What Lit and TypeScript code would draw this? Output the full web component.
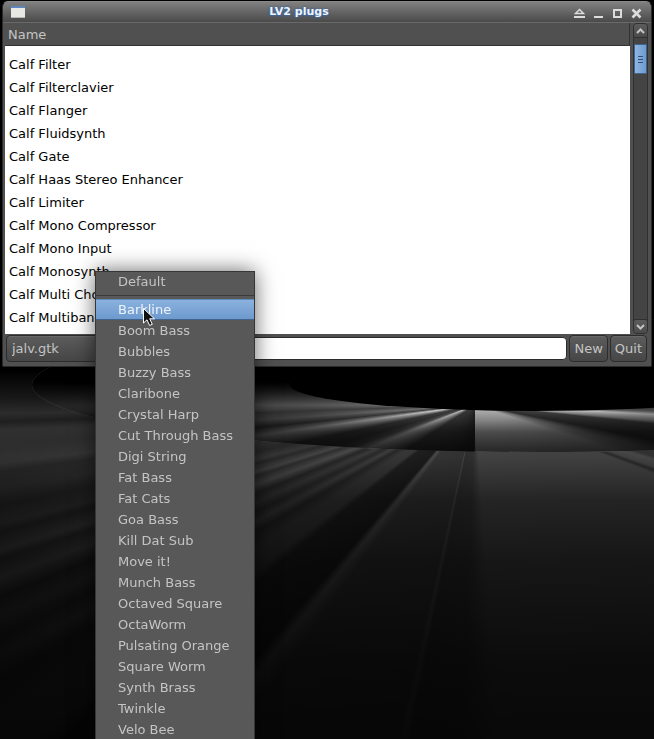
import { LitElement, html, css, svg } from "lit";
import { customElement, state, query } from "lit/decorators.js";
import { classMap } from "lit/directives/class-map.js";

const PLUGINS = [
  "Calf Exciter",
  "Calf Filter",
  "Calf Filterclavier",
  "Calf Flanger",
  "Calf Fluidsynth",
  "Calf Gate",
  "Calf Haas Stereo Enhancer",
  "Calf Limiter",
  "Calf Mono Compressor",
  "Calf Mono Input",
  "Calf Monosynth",
  "Calf Multi Chorus",
  "Calf Multiband Compressor",
  "Calf Multiband Enhancer",
];

const PRESETS = [
  "Barkline",
  "Boom Bass",
  "Bubbles",
  "Buzzy Bass",
  "Claribone",
  "Crystal Harp",
  "Cut Through Bass",
  "Digi String",
  "Fat Bass",
  "Fat Cats",
  "Goa Bass",
  "Kill Dat Sub",
  "Move it!",
  "Munch Bass",
  "Octaved Square",
  "OctaWorm",
  "Pulsating Orange",
  "Square Worm",
  "Synth Brass",
  "Twinkle",
  "Velo Bee",
];

/** Wallpaper: a dark floor with light rays fanning out below a black disc. */
@customElement("desk-wallpaper")
export class DeskWallpaper extends LitElement {
  static styles = css`
    :host {
      display: block;
      position: absolute;
      inset: 0;
      overflow: hidden;
      background: #050505;
    }
    .layer {
      position: absolute;
      inset: 0;
    }
    .floor {
      background:
        linear-gradient(180deg, #000 370px, rgba(0, 0, 0, 0.2) 412px, transparent 430px, rgba(0, 0, 0, 0.05) 455px, rgba(0, 0, 0, 0.48) 500px, rgba(0, 0, 0, 0.68) 560px, rgba(0, 0, 0, 0.83) 660px, rgba(0, 0, 0, 0.88) 739px),
        conic-gradient(from 90deg at 475px 405px,
          #333 0deg, #333 16deg, #4a4a4a 17deg, #444 19deg, #2a2a2a 20deg, #444 21deg, #464646 86deg,
          #323232 92deg, #303030 101deg, #484848 102deg, #343434 103deg, #363636 126deg, #4e4e4e 129deg,
          #1c1c1c 131deg, #202020 141deg, #383838 143deg, #383838 147deg, #282828 150deg, #404040 152deg,
          #2a2a2a 154deg, #3c3c3c 156deg, #282828 158deg, #4c4c4c 160deg, #303030 162deg, #464646 163deg, #2a2a2a 165deg,
          #383838 166deg, #282828 168deg, #303030 170deg, #2a2a2a 172deg, #363636 173deg, #2e2e2e 175deg, #303030 177deg, #222 178deg, #363636 179deg, #2c2c2c 181deg, #2c2c2c 360deg);
    }
    .ring {
      clip-path: ellipse(508px 67px at 540px 385px);
      background:
        radial-gradient(ellipse 420px 120px at 475px 410px, transparent 10%, rgba(0, 0, 0, 0.35) 40%, rgba(0, 0, 0, 0.6) 70%, rgba(0, 0, 0, 0.72) 100%),
        linear-gradient(180deg, #000 382px, rgba(0, 0, 0, 0.25) 403px, transparent 411px, rgba(0, 0, 0, 0.5) 432px, rgba(0, 0, 0, 0.68) 452px),
        conic-gradient(from 90deg at 475px 405px,
          #555 0deg, #777 2deg, #eee 3deg, #999 5deg, #444 6deg, #303030 11deg, #777 14deg, #aaa 18deg, #aaa 89deg,
          #202020 91deg, #303030 120deg, #383838 147deg, #888 154deg, #bbb 158deg, #555 161deg, #383838 164deg,
          #404040 168deg, #ccc 172deg, #444 174deg, #777 176deg, #505050 178deg, #999 180deg, #777 184deg, #333 190deg, #333 360deg);
    }
    .disc {
      clip-path: ellipse(245px 26px at 535px 385px);
      background: #000;
    }
  `;

  render() {
    return html`
      <div class="layer floor"></div>
      <div class="layer ring"></div>
      <div class="layer disc"></div>
    `;
  }
}

@customElement("app-root")
export class AppRoot extends LitElement {
  @state() private active = "Barkline";
  @query(".viewport") private viewport!: HTMLElement;

  static styles = css`
    :host {
      display: block;
      position: relative;
      box-sizing: border-box;
      height: 100vh;
      padding: 1px 2px 0;
      overflow: hidden;
      background: #050505;
      font: 13px/21px "DejaVu Sans", sans-serif;
      color: #c4c4c4;
    }
    * {
      box-sizing: border-box;
    }
    button,
    input,
    select {
      margin: 0;
      font: inherit;
      color: inherit;
    }
    .window {
      position: relative;
      border: 1px solid #2a2a2a;
      border-top-color: #8a8a8a;
      border-radius: 6px 6px 2px 2px;
      background: #505050;
    }
    .titlebar {
      display: flex;
      align-items: center;
      height: 20px;
      padding: 0 8px 0 7px;
      border-radius: 5px 5px 0 0;
      background: linear-gradient(#808080, #4a4a4a);
    }
    .app-icon {
      display: block;
    }
    .title {
      flex: 1;
      margin: 0;
      font-size: 11px;
      line-height: 20px;
      font-weight: bold;
      text-align: center;
      color: #f0f4fa;
      text-shadow: 0 0 2px #3c6ca8, 0 0 2px #3c6ca8, 0 1px 2px #3c6ca8;
    }
    .controls {
      display: flex;
      justify-content: flex-end;
      gap: 5px;
    }
    .control {
      display: block;
      width: 14px;
      height: 14px;
      padding: 0;
      border: 0;
      background: none;
      color: #dcdcdc;
    }
    .control svg {
      display: block;
    }
    .body {
      display: flex;
      gap: 3px;
      padding: 0 3px 0 2px;
      border-top: 1px solid #6a6a6a;
    }
    .viewport {
      flex: 1;
      height: 311px;
      overflow: hidden;
      background: #fff;
    }
    table {
      width: 100%;
      border-collapse: separate;
      border-spacing: 0;
    }
    th {
      position: sticky;
      top: 0;
      height: 23px;
      padding: 0 3px;
      border: 1px solid #333;
      border-width: 0 1px 1px 0;
      background: #505050;
      line-height: 21px;
      font-weight: normal;
      text-align: left;
    }
    td {
      height: 23px;
      padding: 0 4px;
      color: #000;
    }
    .scrollbar {
      display: flex;
      flex-direction: column;
      width: 15px;
      border: 1px solid #303030;
      border-radius: 4px;
      background: #444;
    }
    .step {
      display: block;
      width: 13px;
      height: 13px;
      padding: 1px;
      border: 0;
      border-radius: 3px;
      background: linear-gradient(#5c5c5c, #4a4a4a);
    }
    .step svg {
      display: block;
    }
    .track {
      flex: 1;
      padding-top: 6px;
      border: 1px solid #303030;
      border-width: 1px 0;
    }
    .thumb {
      display: flex;
      flex-direction: column;
      align-items: center;
      justify-content: center;
      gap: 2px;
      height: 30px;
      border: 1px solid #41638c;
      background: linear-gradient(90deg, #8fb6e2, #6d9acf);
    }
    .grip {
      width: 5px;
      height: 1px;
      background: #2f5078;
    }
    .actions {
      display: flex;
      align-items: center;
      gap: 2px;
      padding: 1px 4px 4px 3px;
    }
    .combo,
    .push {
      height: 27px;
      border: 1px solid #2c2c2c;
      border-radius: 4px;
      background: linear-gradient(#5c5c5c, #464646);
      box-shadow: inset 0 1px #686868;
    }
    .combo {
      appearance: none;
      width: 110px;
      padding: 0 5px;
    }
    .push {
      padding: 0 4px;
    }
    .entry {
      flex: 1;
      min-width: 0;
      height: 23px;
      padding: 0 5px;
      border: 1px solid #2c2c2c;
      border-radius: 4px;
      background: #fff;
      color: #000;
    }
    .menu {
      position: absolute;
      top: 271px;
      left: 95px;
      width: 160px;
      padding-bottom: 4px;
      border: 1px solid #363636;
      background: #585858;
      box-shadow: 0 0 20px rgba(0, 0, 0, 0.6);
    }
    .item {
      display: block;
      width: 100%;
      height: 21px;
      padding: 0 22px;
      border: 0;
      background: none;
      line-height: 20px;
      text-align: left;
      white-space: nowrap;
    }
    .item.active {
      background: linear-gradient(#8db3df, #6b98cd);
      box-shadow: inset 0 1px #5d8abf, inset 0 -1px #41638c;
      color: #eef3fa;
    }
    .group {
      height: 24px;
      border-bottom: 1px solid #3a3a3a;
      margin-bottom: 3px;
    }
    .group .item {
      height: 19px;
    }
    .pointer {
      position: absolute;
      top: 307px;
      left: 142px;
      pointer-events: none;
    }
  `;

  firstUpdated() {
    // The list is scrolled so that the first row is mostly under the header.
    this.viewport.scrollTop = 16;
  }

  private chevron(d: string) {
    return html`<svg width="11" height="11" viewBox="0 0 11 11" aria-hidden="true">
      ${svg`<path d=${d} fill="none" stroke="#c4c4c4" stroke-width="2" />`}
    </svg>`;
  }

  private menuItem(name: string) {
    return html`<button
      class=${classMap({ item: true, active: name === this.active })}
      role="menuitem"
      @mouseenter=${() => (this.active = name)}
    >${name}</button>`;
  }

  render() {
    return html`
      <desk-wallpaper></desk-wallpaper>
      <main class="window">
        <header class="titlebar">
          <svg class="app-icon" width="16" height="14" viewBox="0 0 16 14" aria-hidden="true">
            <rect x="1" y="1" width="14" height="12" fill="#e8e8e4" />
            <rect x="1" y="1" width="14" height="2" fill="#5f86bd" />
            <rect x="1" y="12" width="14" height="1" fill="#b8b8b0" />
          </svg>
          <h1 class="title">LV2 plugs</h1>
          <div class="controls">
            <button class="control" aria-label="Shade">
              <svg width="14" height="14" viewBox="0 0 14 14">
                <path d="M3.500 8.500 L7.500 4.500 L11.500 8.500 Z" fill="none" stroke="currentColor" stroke-width="1.500" />
                <path d="M2 12h11" stroke="currentColor" stroke-width="2" />
              </svg>
            </button>
            <button class="control" aria-label="Minimize">
              <svg width="14" height="14" viewBox="0 0 14 14"><path d="M3 12h9" stroke="currentColor" stroke-width="2" /></svg>
            </button>
            <button class="control" aria-label="Maximize">
              <svg width="14" height="14" viewBox="0 0 14 14"><rect x="4" y="5" width="7" height="7" fill="none" stroke="currentColor" stroke-width="2" /></svg>
            </button>
            <button class="control" aria-label="Close">
              <svg width="14" height="14" viewBox="0 0 14 14"><path d="M3.500 4.500l8 8M11.500 4.500l-8 8" stroke="currentColor" stroke-width="2.500" /></svg>
            </button>
          </div>
        </header>
        <section class="body">
          <div class="viewport">
            <table>
              <thead>
                <tr><th scope="col">Name</th></tr>
              </thead>
              <tbody>
                ${PLUGINS.map((name) => html`<tr><td>${name}</td></tr>`)}
              </tbody>
            </table>
          </div>
          <div class="scrollbar">
            <button class="step" aria-label="Scroll up">${this.chevron("M2 8l3.500-3.500l3.500 3.500")}</button>
            <div class="track">
              <div class="thumb">
                <span class="grip"></span><span class="grip"></span><span class="grip"></span>
              </div>
            </div>
            <button class="step" aria-label="Scroll down">${this.chevron("M2 4l3.500 3.500l3.500-3.500")}</button>
          </div>
        </section>
        <footer class="actions">
          <select class="combo" aria-label="Host program">
            <option>jalv.gtk</option>
          </select>
          <input class="entry" type="text" aria-label="Arguments" />
          <button class="push">New</button>
          <button class="push">Quit</button>
        </footer>
      </main>
      <nav class="menu" role="menu" aria-label="Presets">
        <div class="group">${this.menuItem("Default")}</div>
        ${PRESETS.map((name) => this.menuItem(name))}
      </nav>
      <svg class="pointer" width="14" height="21" viewBox="0 0 14 21" aria-hidden="true">
        <path d="M1.500 1.500v14.500l3.500-3.200l2.600 5.700l2.700-1.200l-2.600-5.500h4.800z" fill="#111" stroke="#fff" stroke-width="1" />
      </svg>
    `;
  }
}
